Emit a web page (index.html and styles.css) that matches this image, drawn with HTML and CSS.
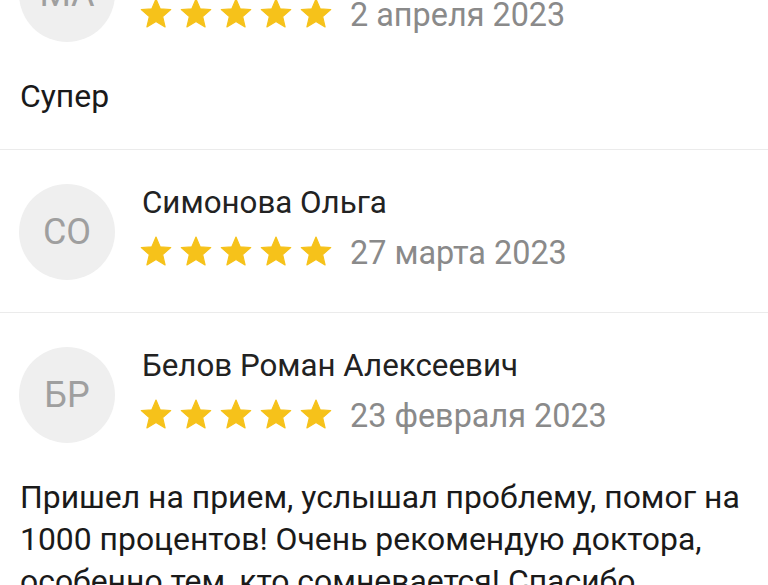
FILE: index.html
```html
<!DOCTYPE html>
<html lang="ru">
<head>
    <meta charset="UTF-8">
    <meta name="viewport" content="width=device-width, initial-scale=1.0">
    <title>Отзывы</title>
    <link rel="stylesheet" href="styles.css">
</head>
<body>
    <svg class="defs" width="0" height="0">
        <symbol id="star" viewBox="1.3 1.3 21.4 20.4">
            <path d="M12 17.27L18.18 21l-1.64-7.03L22 9.24l-7.19-.61L12 2 9.19 8.63 2 9.24l5.46 4.73L5.82 21z"/>
        </symbol>
    </svg>

    <div class="reviews">
        <div class="review">
            <div class="review-head">
                <div class="avatar">МА</div>
                <div class="meta">
                    <div class="author">Морозова Анна</div>
                    <div class="rating">
                        <span class="stars">
                            <svg><use href="#star"/></svg><svg><use href="#star"/></svg><svg><use href="#star"/></svg><svg><use href="#star"/></svg><svg><use href="#star"/></svg>
                        </span>
                        <span class="date">2 апреля 2023</span>
                    </div>
                </div>
            </div>
            <p class="review-text">Супер</p>
        </div>

        <div class="review">
            <div class="review-head">
                <div class="avatar">СО</div>
                <div class="meta">
                    <div class="author">Симонова Ольга</div>
                    <div class="rating">
                        <span class="stars">
                            <svg><use href="#star"/></svg><svg><use href="#star"/></svg><svg><use href="#star"/></svg><svg><use href="#star"/></svg><svg><use href="#star"/></svg>
                        </span>
                        <span class="date">27 марта 2023</span>
                    </div>
                </div>
            </div>
        </div>

        <div class="review">
            <div class="review-head">
                <div class="avatar">БР</div>
                <div class="meta">
                    <div class="author">Белов Роман Алексеевич</div>
                    <div class="rating">
                        <span class="stars">
                            <svg><use href="#star"/></svg><svg><use href="#star"/></svg><svg><use href="#star"/></svg><svg><use href="#star"/></svg><svg><use href="#star"/></svg>
                        </span>
                        <span class="date">23 февраля 2023</span>
                    </div>
                </div>
            </div>
            <p class="review-text">Пришел на прием, услышал проблему, помог на 1000 процентов! Очень рекомендую доктора, особенно тем, кто сомневается! Спасибо большое!</p>
        </div>
    </div>
</body>
</html>
```

FILE: styles.css
```css
body {
    margin: 0;
    background-color: #ffffff;
    font-family: Roboto, "Noto Sans", sans-serif;
    color: #1c1c1c;
    overflow: hidden;
}
.defs {
    position: absolute;
}
.reviews {
    margin-top: -88px;
}
.review {
    padding: 34px 20px 32px;
    border-bottom: 1px solid #ebebeb;
}
.review-head {
    display: flex;
    align-items: flex-start;
}
.avatar {
    width: 96px;
    height: 96px;
    flex-shrink: 0;
    border-radius: 50%;
    background-color: #efefef;
    color: #9f9f9f;
    font-size: 36px;
    display: flex;
    align-items: center;
    justify-content: center;
    margin-left: -1px;
}
.meta {
    margin-left: 27px;
    margin-top: -1px;
}
.author {
    font-size: 31.3px;
    line-height: 40px;
    color: #222222;
}
.rating {
    display: flex;
    align-items: center;
    height: 40px;
    margin-top: 10px;
}
.stars {
    display: flex;
    gap: 8px;
    margin-bottom: 5px;
    margin-left: -2px;
}
.stars svg {
    width: 32px;
    height: 30px;
    fill: #f6c21a;
    stroke: #f6c21a;
    stroke-width: 0.8;
    stroke-linejoin: round;
}
.date {
    margin-left: 18px;
    font-size: 32.4px;
    color: #8a8a8a;
}
.review-text {
    margin: 33px 0 0;
    font-size: 31.9px;
    line-height: 42px;
    color: #1a1a1a;
}
```
